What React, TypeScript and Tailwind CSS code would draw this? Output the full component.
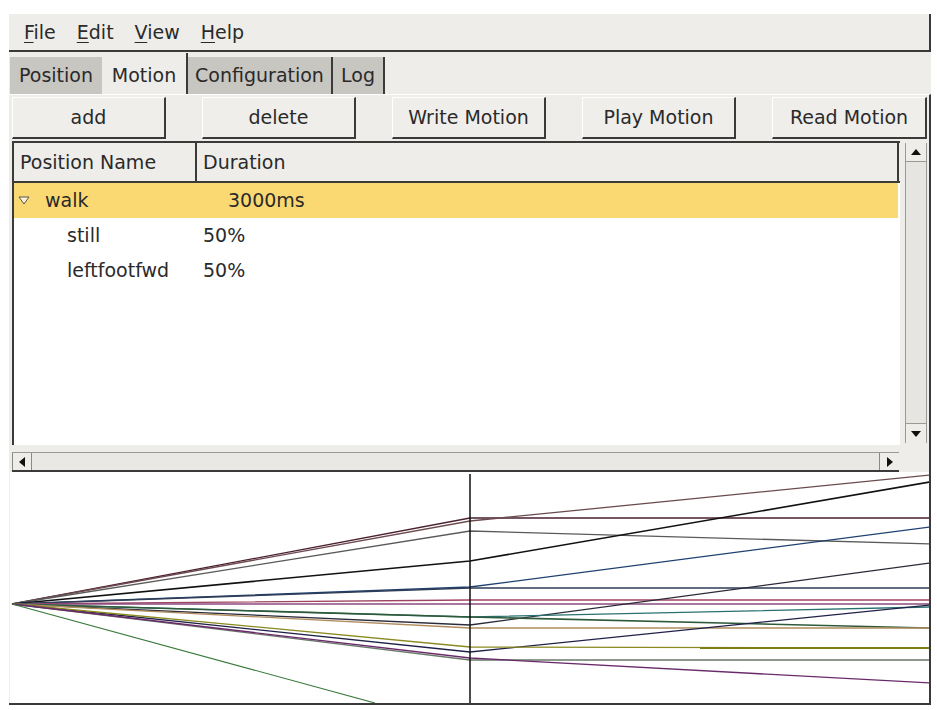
import React from 'react';

type Trace = { mid: number; end: number; color: string; w?: number };

// every trace starts at the same keyframe point on the left edge
const ORIGIN_X = 12;
const ORIGIN_Y = 604;
const MID_X = 470;
const END_X = 930;

const traces: Trace[] = [
  { mid: 518, end: 518, color: '#4a1f30' },
  { mid: 521, end: 475, color: '#6b4b4f' },
  { mid: 531, end: 544, color: '#5a5a5a' },
  { mid: 561, end: 482, color: '#111111', w: 1.6 },
  { mid: 587, end: 527, color: '#1f4070' },
  { mid: 588, end: 588, color: '#2f3d55' },
  { mid: 600, end: 600, color: '#a04464' },
  { mid: 604, end: 604, color: '#8a4a7c' },
  { mid: 625, end: 563, color: '#2a2a3a' },
  { mid: 617, end: 607, color: '#2a7070' },
  { mid: 617, end: 628, color: '#2f5a3a', w: 1.6 },
  { mid: 628, end: 628, color: '#b08c5c' },
  { mid: 652, end: 605, color: '#202048' },
  { mid: 647, end: 648, color: '#8a8a20' },
  { mid: 660, end: 660, color: '#6a786a' },
  { mid: 658, end: 683, color: '#6a2a6a' },
];

const tabs = [
  { label: 'Position', w: 'w-[92px]', active: false },
  { label: 'Motion', w: 'w-[86px]', active: true },
  { label: 'Configuration', w: 'w-[145px]', active: false },
  { label: 'Log', w: 'w-[52px]', active: false },
];

const buttons = ['add', 'delete', 'Write Motion', 'Play Motion', 'Read Motion'];

function MotionChart() {
  return (
    <svg width={919} height={231} viewBox="10 472 919 231" className="block">
      {traces.map((t, i) => (
        <polyline
          key={i}
          points={`${ORIGIN_X},${ORIGIN_Y} ${MID_X},${t.mid} ${END_X},${t.end}`}
          fill="none"
          stroke={t.color}
          strokeWidth={t.w ?? 1.3}
        />
      ))}
      <line x1={700} y1={648} x2={930} y2={648} stroke="#7d7d10" strokeWidth={2} />
      <line x1={ORIGIN_X} y1={ORIGIN_Y} x2={375} y2={703} stroke="#3a7a3a" strokeWidth={1.2} />
      <line x1={MID_X} y1={474} x2={MID_X} y2={703} stroke="#111" strokeWidth={1.5} />
    </svg>
  );
}

function Arrow({ dir }: { dir: 'up' | 'down' | 'left' | 'right' }) {
  const pts = {
    up: '0,6 5,0 10,6',
    down: '0,0 10,0 5,6',
    left: '6,0 6,10 0,5',
    right: '0,0 6,5 0,10',
  }[dir];
  const vertical = dir === 'up' || dir === 'down';
  return (
    <svg width={vertical ? 10 : 6} height={vertical ? 6 : 10} className="block">
      <polygon points={pts} fill="#111" />
    </svg>
  );
}

export default function App() {
  return (
    <div className="w-[937px] h-[710px] bg-white pt-[14px] pl-[9px] overflow-hidden font-['DejaVu_Sans',sans-serif] text-[19px] text-[#2a2a2a] leading-none">
      <div className="w-[922px]">
        {/* menu bar */}
        <div className="h-[38px] bg-[#eeede9] border-r-2 border-b-2 border-[#3a3a3a] flex items-center gap-[21px] pl-[15px] pt-[1px]">
          <span><span className="underline underline-offset-[3px]">F</span>ile</span>
          <span><span className="underline underline-offset-[3px]">E</span>dit</span>
          <span><span className="underline underline-offset-[3px]">V</span>iew</span>
          <span><span className="underline underline-offset-[3px]">H</span>elp</span>
        </div>

        {/* notebook tabs */}
        <div className="h-[42px] bg-[#eeede9] flex items-end pl-[1px]">
          {tabs.map((t) => (
            <div
              key={t.label}
              className={
                t.active
                  ? `${t.w} h-[41px] bg-[#eeede9] border-r-2 border-[#3a3a3a] flex items-center justify-center pt-[3px]`
                  : `${t.w} h-[37px] bg-[#c8c6c1] flex items-center justify-center ${
                      t.label === 'Position' ? '' : 'border-r-2 border-[#3a3a3a]'
                    }`
              }
            >
              {t.label}
            </div>
          ))}
        </div>

        {/* page */}
        <div className="h-[611px] bg-[#eeede9] border-t border-t-white border-r-2 border-b-2 border-r-[#3a3a3a] border-b-[#3a3a3a]">
          <div className="flex gap-[36px] pl-[3px] pt-[2px]">
            {buttons.map((b, i) => (
              <div
                key={b}
                className={`${i === 4 ? 'w-[155px]' : 'w-[154px]'} h-[42px] bg-[#efeeea] border-t border-l border-white border-r-2 border-b-2 border-r-[#3a3a3a] border-b-[#3a3a3a] flex items-center justify-center`}
              >
                {b}
              </div>
            ))}
          </div>

          {/* tree view */}
          <div className="mt-[2px] ml-[3px] flex h-[304px]">
            <div className="w-[888px] border-l-2 border-t-2 border-[#3a3a3a] bg-white flex flex-col">
              <div className="h-[40px] flex bg-[#eeede9] border-b-2 border-[#3a3a3a] shrink-0">
                <div className="w-[183px] border-r-2 border-[#3a3a3a] pl-[6px] flex items-center">Position Name</div>
                <div className="w-[702px] border-r-2 border-[#3a3a3a] pl-[6px] flex items-center">Duration</div>
              </div>
              <div className="h-[35px] w-[884px] bg-[#fbd972] flex items-center">
                <div className="w-[183px] pl-[4px] flex items-center gap-[15px]">
                  <svg width={12} height={9} className="block">
                    <polygon points="1,1 11,1 6,8" fill="#fdf3d0" stroke="#555" strokeWidth={1} />
                  </svg>
                  <span>walk</span>
                </div>
                <div className="pl-[31px]">3000ms</div>
              </div>
              <div className="h-[35px] flex items-center">
                <div className="w-[183px] pl-[53px]">still</div>
                <div className="pl-[6px]">50%</div>
              </div>
              <div className="h-[35px] flex items-center">
                <div className="w-[183px] pl-[53px]">leftfootfwd</div>
                <div className="pl-[6px]">50%</div>
              </div>
            </div>

            {/* vertical scrollbar */}
            <div className="w-[29px] flex flex-col pl-[5px] pr-[2px] py-[2px]">
              <div className="flex-1 flex flex-col border-l border-r border-[#9a9994] bg-[#e6e5e1]">
                <div className="h-[19px] border-b border-[#9a9994] bg-[#eeede9] flex items-center justify-center">
                  <Arrow dir="up" />
                </div>
                <div className="flex-1" />
                <div className="h-[20px] border-t border-[#9a9994] bg-[#eeede9] flex items-center justify-center">
                  <Arrow dir="down" />
                </div>
              </div>
            </div>
          </div>

          {/* horizontal scrollbar */}
          <div className="flex h-[27px]">
            <div className="ml-[3px] w-[888px] pt-[7px] pr-[1px]">
              <div className="h-[20px] flex border-t border-[#9a9994] border-b-2 border-b-[#3a3a3a] bg-[#e9e8e4]">
                <div className="w-[20px] border-r border-l border-[#8a8985] bg-[#eeede9] flex items-center justify-center">
                  <Arrow dir="left" />
                </div>
                <div className="flex-1" />
                <div className="w-[20px] border-l border-[#8a8985] bg-[#eeede9] flex items-center justify-center">
                  <Arrow dir="right" />
                </div>
              </div>
            </div>
            <div className="flex-1 bg-[#eeede9]" />
          </div>

          {/* motion preview */}
          <div className="h-[231px] ml-[1px] bg-white">
            <MotionChart />
          </div>
        </div>
      </div>
    </div>
  );
}
